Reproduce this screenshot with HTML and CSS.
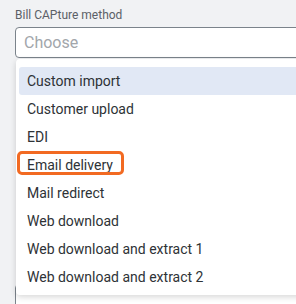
FILE: index.html
```html
<!DOCTYPE html>
<html lang="en">
<head>
  <meta charset="UTF-8" />
  <meta name="viewport" content="width=device-width, initial-scale=1.0" />
  <title>Bill capture method</title>
  <link rel="stylesheet" href="styles.css">
</head>
<body>

  <div class="field">
    <label class="field-label">Bill CAPture method</label>
    <div class="select">
      <span class="placeholder">Choose</span>
    </div>

    <ul class="dropdown">
      <li class="option active">Custom import</li>
      <li class="option">Customer upload</li>
      <li class="option">EDI</li>
      <li class="option">Email delivery<span class="marker"></span></li>
      <li class="option">Mail redirect</li>
      <li class="option">Web download</li>
      <li class="option">Web download and extract 1</li>
      <li class="option">Web download and extract 2</li>
    </ul>
  </div>

  <!-- next field, mostly hidden behind the open menu -->
  <div class="field next">
    <div class="select"></div>
  </div>

</body>
</html>
```

FILE: styles.css
```css
* {
  margin: 0;
  padding: 0;
  box-sizing: border-box;
  font-family: 'Roboto', 'Liberation Sans', sans-serif;
}

body {
  background-color: #f1f2f4;
  color: #2e3236;
  overflow: hidden;
  height: 304px;
}

.field {
  position: relative;
  margin: 0 -30px 0 15px;
}

.field-label {
  display: block;
  padding-top: 8px;
  font-size: 12px;
  line-height: 14px;
  color: #5b6067;
  margin-bottom: 5px;
}

.select {
  height: 31px;
  background: #fff;
  border: 1px solid #7b838b;
  border-radius: 4px;
  padding: 0 8px;
  display: flex;
  align-items: center;
}

.placeholder {
  font-size: 16px;
  color: #a2a6ab;
}

/* Menu */
.dropdown {
  position: absolute;
  top: 59px;
  left: 1px;
  right: 0;
  z-index: 10;
  list-style: none;
  background: #fff;
  border-radius: 4px;
  padding: 8px 4px 4px 3px;
  box-shadow: 0 2px 6px rgba(0, 0, 0, 0.16);
}

.option {
  position: relative;
  height: 28px;
  line-height: 28px;
  padding: 0 8px;
  font-size: 14px;
  color: #2e3236;
  border-radius: 3px;
}

.option.active {
  background-color: #e1e8f5;
}

.marker {
  position: absolute;
  left: -2px;
  top: 0;
  width: 107px;
  height: 24px;
  border: 3px solid #f26a22;
  border-radius: 5px;
}

.field.next {
  margin-top: 226px;
}

.field.next .select {
  height: 40px;
}
```
